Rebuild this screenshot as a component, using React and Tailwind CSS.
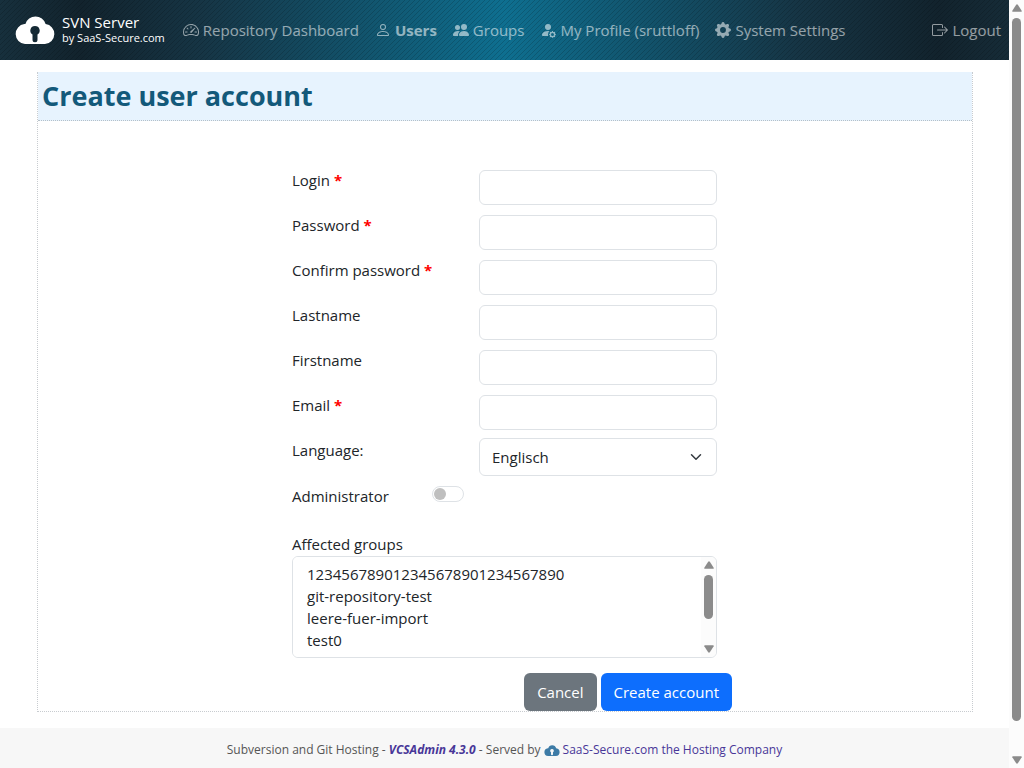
import { useState } from 'react'
import { BsSpeedometer2, BsPerson, BsPeopleFill, BsPersonFillGear, BsGearFill, BsBoxArrowRight } from 'react-icons/bs'

const NAV = [
  { label: 'Repository Dashboard', icon: BsSpeedometer2 },
  { label: 'Users', icon: BsPerson, active: true },
  { label: 'Groups', icon: BsPeopleFill },
  { label: 'My Profile (sruttloff)', icon: BsPersonFillGear },
  { label: 'System Settings', icon: BsGearFill },
]

const FIELDS = [
  { id: 'login', label: 'Login', required: true },
  { id: 'password', label: 'Password', type: 'password', required: true },
  { id: 'confirm', label: 'Confirm password', type: 'password', required: true },
  { id: 'lastname', label: 'Lastname' },
  { id: 'firstname', label: 'Firstname' },
  { id: 'email', label: 'Email', type: 'email', required: true },
]

const GROUPS = ['123456789012345678901234567890', 'git-repository-test', 'leere-fuer-import', 'test0']

function CloudLogo({ className }) {
  return (
    <svg viewBox="0 0 40 28" className={className} aria-hidden="true">
      <path
        fill="currentColor"
        fillRule="evenodd"
        d="M10 28a10 10 0 0 1-.6-19.9H10.4A10.5 10.5 0 0 1 30.6 8.1 10 10 0 0 1 30 28H10Zm10-18a4.6 4.6 0 0 0-2.5 8.5v5.3a2.5 2.5 0 0 0 5 0v-5.3A4.6 4.6 0 0 0 20 10Z"
      />
    </svg>
  )
}

function Arrow({ down }) {
  return (
    <svg viewBox="0 0 10 8" className="h-2 w-2.5 shrink-0" aria-hidden="true">
      <path
        fill="#8b8b8b"
        d={down ? 'M0.3 1.2Q0 .3 1 .3H9Q10 .3 9.7 1.2L6 7.1Q5 8.3 4 7.1Z' : 'M0.3 6.8Q0 7.7 1 7.7H9Q10 7.7 9.7 6.8L6 .9Q5 -.3 4 .9Z'}
      />
    </svg>
  )
}

export default function App() {
  const [admin, setAdmin] = useState(false)

  return (
    <div className="flex min-h-screen bg-white font-['Open_Sans','Noto_Sans',sans-serif] text-[15px] text-[#212529]">
      <div className="flex min-w-0 flex-1 flex-col">
        {/* top bar */}
        <header className="flex h-[60px] items-center bg-[linear-gradient(135deg,transparent_42%,rgba(0,0,0,0.16)_42%_58%,transparent_58%),linear-gradient(90deg,#17303d_0%,#12232d_8%,#163545_20%,#0e6f90_50%,#163545_79%,#12232d_93%,#162c38_100%)] [background-size:5px_5px,100%_100%] pr-2 pl-[15px] text-white/55">
          <a href="#" className="flex items-center gap-[7px] text-white">
            <CloudLogo className="h-7 w-10" />
            <span className="flex flex-col whitespace-nowrap">
              <span className="text-[15px] leading-[16px]">SVN Server</span>
              <span className="text-[11px] leading-[16px]">by SaaS-Secure.com</span>
            </span>
          </a>
          <nav className="ml-[18px] flex flex-1 items-center gap-4 whitespace-nowrap">
            {NAV.map(({ label, icon: Icon, active }) => (
              <a key={label} href="#" className={`flex items-center gap-1 ${active ? 'font-bold' : ''}`}>
                <Icon className="h-4 w-4" />
                {label}
              </a>
            ))}
            <a href="#" className="ml-auto flex items-center gap-1">
              <BsBoxArrowRight className="h-4 w-4" />
              Logout
            </a>
          </nav>
        </header>

        {/* form card */}
        <main className="mt-3 mr-9 mb-4 ml-[37px] flex-1 border border-t-0 border-dotted border-[#c8ccd0]">
          <h1 className="border-b border-dotted border-[#b5c0c8] bg-[#e7f3fe] px-1 text-[27px] leading-[48px] font-bold text-[#13597a]">
            Create user account
          </h1>
          <form className="mx-auto mt-[49px] max-w-[454px]" onSubmit={e => e.preventDefault()}>
            <div className="pr-[15px] pl-[14px]">
              <div className="flex flex-col gap-[10px]">
                {FIELDS.map(f => (
                  <div key={f.id} className="grid grid-cols-[187px_1fr] items-start">
                    <label htmlFor={f.id} className="leading-5">
                      {f.label}
                      {f.required && <b className="text-[#f00]"> *</b>}
                    </label>
                    <input
                      id={f.id}
                      type={f.type || 'text'}
                      className="h-[35px] w-full rounded-md border border-[#dee2e6] bg-white px-3"
                    />
                  </div>
                ))}
              </div>

              <div className="mt-2 grid grid-cols-[187px_1fr] items-start">
                <label htmlFor="language" className="pt-0.5 leading-5">Language:</label>
                <div className="relative">
                  <select id="language" className="h-[38px] w-full appearance-none rounded-md border border-[#dee2e6] bg-white px-3">
                    <option>Englisch</option>
                  </select>
                  <svg viewBox="0 0 16 16" className="pointer-events-none absolute top-[13px] right-[15px] h-3 w-3" aria-hidden="true">
                    <path d="m2 5 6 6 6-6" fill="none" stroke="#343a40" strokeWidth="2" strokeLinecap="round" strokeLinejoin="round" />
                  </svg>
                </div>
              </div>

              <div className="mt-[10px] flex items-start">
                <label htmlFor="admin" className="w-[140px] leading-5">Administrator</label>
                <input
                  id="admin"
                  type="checkbox"
                  role="switch"
                  checked={admin}
                  onChange={e => setAdmin(e.target.checked)}
                  className="h-4 w-8 appearance-none rounded-full border border-[#dee2e6] bg-white before:m-px before:block before:h-3 before:w-3 before:rounded-full before:bg-[#bfbfbf] checked:bg-[#0d6efd] checked:before:ml-[17px] checked:before:bg-white"
                />
              </div>

              <label htmlFor="groups" className="mt-7 mb-0.5 block leading-5">Affected groups</label>
              <div className="flex h-[102px] overflow-hidden rounded-md border border-[#dee2e6]">
                <select
                  id="groups"
                  multiple
                  size={4}
                  className="min-w-0 flex-1 appearance-none bg-white py-[7px] pl-3 [scrollbar-width:none]"
                >
                  {GROUPS.map(g => (
                    <option key={g} className="h-[22px] px-0.5 py-0 leading-[22px]">{g}</option>
                  ))}
                </select>
                <div className="flex w-[15px] flex-col items-center bg-[#fcfcfc] py-1">
                  <Arrow />
                  <div className="mt-1.5 mb-auto h-11 w-[9px] rounded-full bg-[#8b8b8b]" />
                  <Arrow down />
                </div>
              </div>
            </div>

            <div className="mt-[15px] flex justify-end gap-1">
              <button type="button" className="h-[38px] rounded-md bg-[#6c757d] px-[13px] text-white">Cancel</button>
              <button type="submit" className="h-[38px] rounded-md bg-[#0d6efd] px-[13px] text-white">Create account</button>
            </div>
          </form>
        </main>

        <footer className="flex h-10 items-center justify-center gap-[3px] bg-[#f7f7f7] pt-1 text-[12px] text-[#555]">
          <span>
            Subversion and Git Hosting - <a href="#" className="font-bold text-[#483698] italic">VCSAdmin 4.3.0</a> - Served by
          </span>
          <CloudLogo className="h-[11px] w-4 text-[#3d7ba6]" />
          <a href="#" className="text-[#483698]">SaaS-Secure.com the Hosting Company</a>
        </footer>
      </div>

      {/* page scrollbar */}
      <div className="flex w-[15px] shrink-0 flex-col items-center bg-[#fcfcfc] py-1">
        <Arrow />
        <div className="my-1.5 w-[9px] flex-1 rounded-full bg-[#8b8b8b]" />
        <div className="h-[29px]" />
        <Arrow down />
      </div>
    </div>
  )
}
